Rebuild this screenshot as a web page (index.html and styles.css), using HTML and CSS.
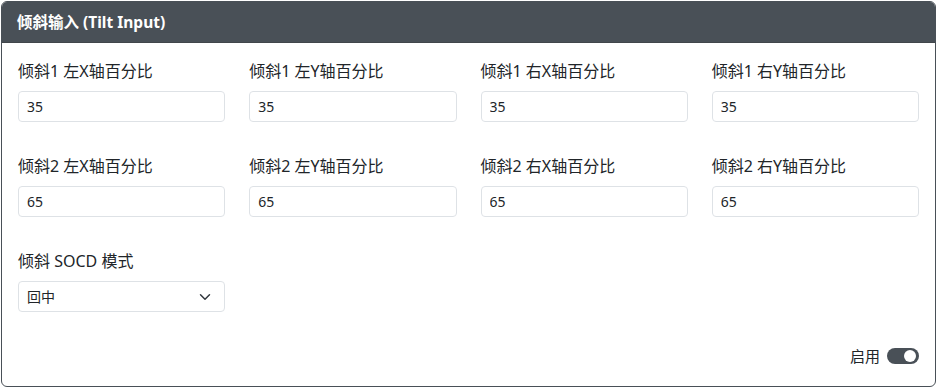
FILE: index.html
```html
<!DOCTYPE html>
<html lang="zh">

<head>
    <meta charset="UTF-8">
    <meta name="viewport" content="width=device-width, initial-scale=1.0">
    <title>倾斜输入</title>
    <link rel="stylesheet" href="styles.css">
</head>

<body>
    <div class="card">
        <div class="card-header">倾斜输入 (Tilt Input)</div>
        <div class="card-body">
            <div class="row">
                <div class="field">
                    <label for="tilt1LeftX">倾斜1 左X轴百分比</label>
                    <input type="text" id="tilt1LeftX" value="35">
                </div>
                <div class="field">
                    <label for="tilt1LeftY">倾斜1 左Y轴百分比</label>
                    <input type="text" id="tilt1LeftY" value="35">
                </div>
                <div class="field">
                    <label for="tilt1RightX">倾斜1 右X轴百分比</label>
                    <input type="text" id="tilt1RightX" value="35">
                </div>
                <div class="field">
                    <label for="tilt1RightY">倾斜1 右Y轴百分比</label>
                    <input type="text" id="tilt1RightY" value="35">
                </div>
            </div>
            <div class="row">
                <div class="field">
                    <label for="tilt2LeftX">倾斜2 左X轴百分比</label>
                    <input type="text" id="tilt2LeftX" value="65">
                </div>
                <div class="field">
                    <label for="tilt2LeftY">倾斜2 左Y轴百分比</label>
                    <input type="text" id="tilt2LeftY" value="65">
                </div>
                <div class="field">
                    <label for="tilt2RightX">倾斜2 右X轴百分比</label>
                    <input type="text" id="tilt2RightX" value="65">
                </div>
                <div class="field">
                    <label for="tilt2RightY">倾斜2 右Y轴百分比</label>
                    <input type="text" id="tilt2RightY" value="65">
                </div>
            </div>
            <div class="row">
                <div class="field">
                    <label for="socdMode">倾斜 SOCD 模式</label>
                    <select id="socdMode">
                        <option>回中</option>
                        <option>上优先</option>
                        <option>最后输入优先</option>
                    </select>
                </div>
            </div>
            <div class="switch-row">
                <label for="enabled">启用</label>
                <input type="checkbox" id="enabled" class="switch" checked>
            </div>
        </div>
    </div>
</body>

</html>
```

FILE: styles.css
```css
* {
    margin: 0;
    padding: 0;
    box-sizing: border-box;
}

body {
    font-family: "Noto Sans", "Noto Sans CJK SC", sans-serif;
    color: #212529;
    background-color: #fff;
}

.card {
    margin: 1px 1px 0 1px;
    width: 935px;
    border: 1px solid #495057;
    border-radius: 6px;
    overflow: hidden;
}

.card-header {
    background-color: #495057;
    color: #fff;
    font-size: 15.5px;
    font-weight: bold;
    line-height: 22px;
    padding: 9px 15px;
    border-bottom: 1px solid #41464b;
}

.card-body {
    padding: 16px 16px 18px 16px;
}

.row {
    display: grid;
    grid-template-columns: repeat(4, 1fr);
    column-gap: 24px;
}

.field {
    margin-bottom: 32px;
}

label {
    display: block;
    font-size: 16px;
    line-height: 24px;
    margin-bottom: 8px;
}

input[type="text"],
select {
    display: block;
    width: 100%;
    height: 31px;
    padding: 4px 8px;
    font-family: inherit;
    font-size: 14px;
    line-height: 21px;
    color: #212529;
    background-color: #fff;
    border: 1px solid #dee2e6;
    border-radius: 4px;
    outline: none;
}

select {
    appearance: none;
    -webkit-appearance: none;
    padding-right: 32px;
    background-image: url("data:image/svg+xml,%3csvg xmlns='http://www.w3.org/2000/svg' viewBox='0 0 16 16'%3e%3cpath fill='none' stroke='%23343a40' stroke-linecap='round' stroke-linejoin='round' stroke-width='2' d='m2 5 6 6 6-6'/%3e%3c/svg%3e");
    background-repeat: no-repeat;
    background-position: right 12px center;
    background-size: 14px 12px;
}

.switch-row {
    display: flex;
    justify-content: flex-end;
    align-items: center;
    gap: 7px;
    height: 24px;
}

.switch-row label {
    display: inline-block;
    font-size: 15px;
    margin-bottom: 0;
}

.switch {
    appearance: none;
    -webkit-appearance: none;
    width: 32px;
    height: 16px;
    border-radius: 8px;
    background-color: #495057;
    position: relative;
    cursor: pointer;
}

.switch::after {
    content: "";
    position: absolute;
    top: 2px;
    right: 3px;
    width: 12px;
    height: 12px;
    border-radius: 50%;
    background-color: #fff;
}
```
